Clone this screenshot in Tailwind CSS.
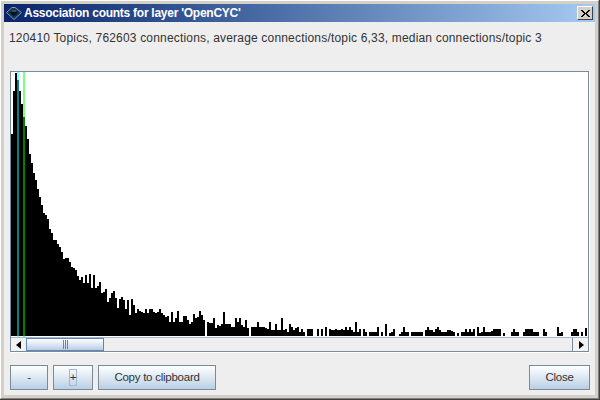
<!DOCTYPE html>
<html>
<head>
  <title>Association counts</title>
  <script src="https://cdn.jsdelivr.net/npm/@tailwindcss/browser@4"></script>
</head>
<body class="w-[600px] h-[400px] overflow-hidden bg-[#d4d0c8] font-['Liberation_Sans',Arial,sans-serif] text-[12px] text-[#333333]">
  <div class="h-[400px] flex flex-col border-r border-b border-[#404040]">
    <div class="h-full flex flex-col border border-t-[#ffffff] border-l-[#ffffff] border-r-[#808080] border-b-[#808080] p-[3px]">

      <!-- title bar -->
      <div class="h-[18px] shrink-0 flex items-center justify-between bg-gradient-to-r from-[#0a246a] to-[#a6caf0] px-[2px]">
        <div class="flex items-center gap-[2px]">
          <svg width="16" height="13" viewBox="0 0 16 13">
            <path d="M0.5 5.5 L6 0.5 H9 L15.5 5.5 L8 12.5 Z" fill="#16304f" stroke="#7f9cbc" stroke-width="1"/>
            <path d="M4 6 L8 3 L12 6 L8 9 Z" fill="#08121f"/>
            <path d="M6 4 H10" stroke="#5f7f9f" stroke-width="1"/>
          </svg>
          <span class="font-bold text-white leading-none tracking-[-0.26px]">Association counts for layer 'OpenCYC'</span>
        </div>
        <button class="w-[16px] h-[14px] bg-[#d4d0c8] border border-t-white border-l-white border-r-[#404040] border-b-[#404040] flex items-center justify-center">
          <svg width="9" height="7" viewBox="0 0 9 7" shape-rendering="crispEdges"><path d="M0 0h2v1h-2zM7 0h2v1h-2zM1 1h2v1h-2zM6 1h2v1h-2zM2 2h2v1h-2zM5 2h2v1h-2zM3 3h3v1h-3zM2 4h2v1h-2zM5 4h2v1h-2zM1 5h2v1h-2zM6 5h2v1h-2zM0 6h2v1h-2zM7 6h2v1h-2z" fill="#000"/></svg>
        </button>
      </div>

      <!-- content -->
      <div class="flex-1 bg-[#eeeeee] flex flex-col px-[6px]">
        <div class="h-[31px] pt-[7px] -ml-[1px] whitespace-nowrap tracking-[0.18px]">120410 Topics, 762603 connections, average connections/topic 6,33, median connections/topic 3</div>

        <div class="mt-[18px] w-[579px] h-[281px] border border-[#7a8a99] flex flex-col shadow-[1px_1px_0_#ffffff]">
          <div class="h-[265px] bg-white">
            <svg id="chart" width="577" height="265" viewBox="11 72 577 265" shape-rendering="crispEdges" class="block">
              <path id="bars" fill="#000"></path>
              <rect x="17" y="72" width="2" height="265" fill="#00ffff" fill-opacity="0.5"></rect>
              <rect x="23" y="72" width="2" height="265" fill="#00ff00" fill-opacity="0.5"></rect>
            </svg>
          </div>
          <!-- scrollbar -->
          <div class="h-[14px] flex border-t border-[#a3b8cc] bg-[#eeeeee]">
            <div class="w-[15px] flex items-center justify-center bg-[#f2f2f2]">
              <svg width="6" height="8" viewBox="0 0 6 8"><path d="M5 0 V8 L0 4 Z" fill="#000"/></svg>
            </div>
            <div class="w-[78px] flex items-center justify-center gap-[1px] border border-[#6382bf] bg-gradient-to-b from-[#ffffff] via-[#dde8f3] to-[#b8cfe5]">
              <span class="w-px h-[9px] bg-[#6382bf]"></span>
              <span class="w-px h-[9px] bg-[#6382bf]"></span>
              <span class="w-px h-[9px] bg-[#6382bf]"></span>
            </div>
            <div class="flex-1"></div>
            <div class="w-[16px] flex items-center justify-center border-l border-[#7a8a99] bg-[#f2f2f2]">
              <svg width="6" height="8" viewBox="0 0 6 8"><path d="M1 0 V8 L6 4 Z" fill="#000"/></svg>
            </div>
          </div>
        </div>

        <!-- buttons -->
        <div class="mt-[13px] w-[580px] flex items-start text-[11.5px] tracking-[-0.25px]">
          <button class="w-[38px] h-[25px] border border-[#7a8a99] bg-gradient-to-b from-[#ffffff] via-[#dde8f3] to-[#b8cfe5]">-</button>
          <button class="ml-[5px] w-[40px] h-[25px] border border-[#7a8a99] bg-gradient-to-b from-[#ffffff] via-[#dde8f3] to-[#b8cfe5] flex items-center justify-center">
            <span class="w-[8px] h-[17px] border border-[#a3b8cc] flex items-center justify-center leading-none">+</span>
          </button>
          <button class="ml-[5px] w-[118px] h-[25px] border border-[#7a8a99] bg-gradient-to-b from-[#ffffff] via-[#dde8f3] to-[#b8cfe5]">Copy to clipboard</button>
          <button class="ml-auto w-[61px] h-[25px] border border-[#7a8a99] bg-gradient-to-b from-[#ffffff] via-[#dde8f3] to-[#b8cfe5]">Close</button>
        </div>
      </div>
    </div>
  </div>

  <script>
    // top y of each 2px bar, first bar at x=11, baseline y=336
    const tops = [
      134,91,73,80,91,104,117,126,139,154,163,173,180,189,197,205,213,215,219,229,
      233,240,240,244,247,252,259,258,258,262,267,268,270,276,280,277,283,275,283,274,
      288,275,288,286,282,293,292,289,302,298,293,291,298,308,299,297,300,309,300,315,
      299,305,313,309,311,312,313,309,313,309,309,312,313,312,309,313,315,317,316,322,
      312,322,318,311,322,322,316,316,320,324,322,314,318,317,311,315,320,336,322,323,
      323,318,328,325,326,324,312,324,324,324,327,327,318,322,318,325,327,320,328,336,
      327,327,327,322,327,327,327,328,329,322,330,330,324,330,330,318,330,329,332,324,
      327,330,328,327,332,329,332,336,329,329,329,336,336,329,336,329,336,327,336,329,
      330,330,329,330,330,329,330,327,330,327,330,332,322,332,329,336,329,332,336,332,
      332,332,332,327,336,332,336,324,336,333,332,329,336,336,334,332,327,332,332,336,
      332,332,332,332,332,332,336,330,327,330,330,332,329,327,330,332,332,332,330,330,
      331,332,336,333,336,332,332,329,332,329,332,329,336,327,333,332,327,332,332,332,
      331,329,329,329,329,336,333,336,336,336,332,329,332,332,336,336,332,329,329,329,
      329,332,332,332,336,336,329,332,336,336,336,336,336,327,333,332,336,336,336,336,
      332,329,329,332,336,332,336,328,336
    ];
    document.getElementById("bars").setAttribute("d",
      tops.map((t, i) => `M${11 + 2 * i} ${t}h2V336h-2z`).join(""));
  </script>
</body>
</html>
